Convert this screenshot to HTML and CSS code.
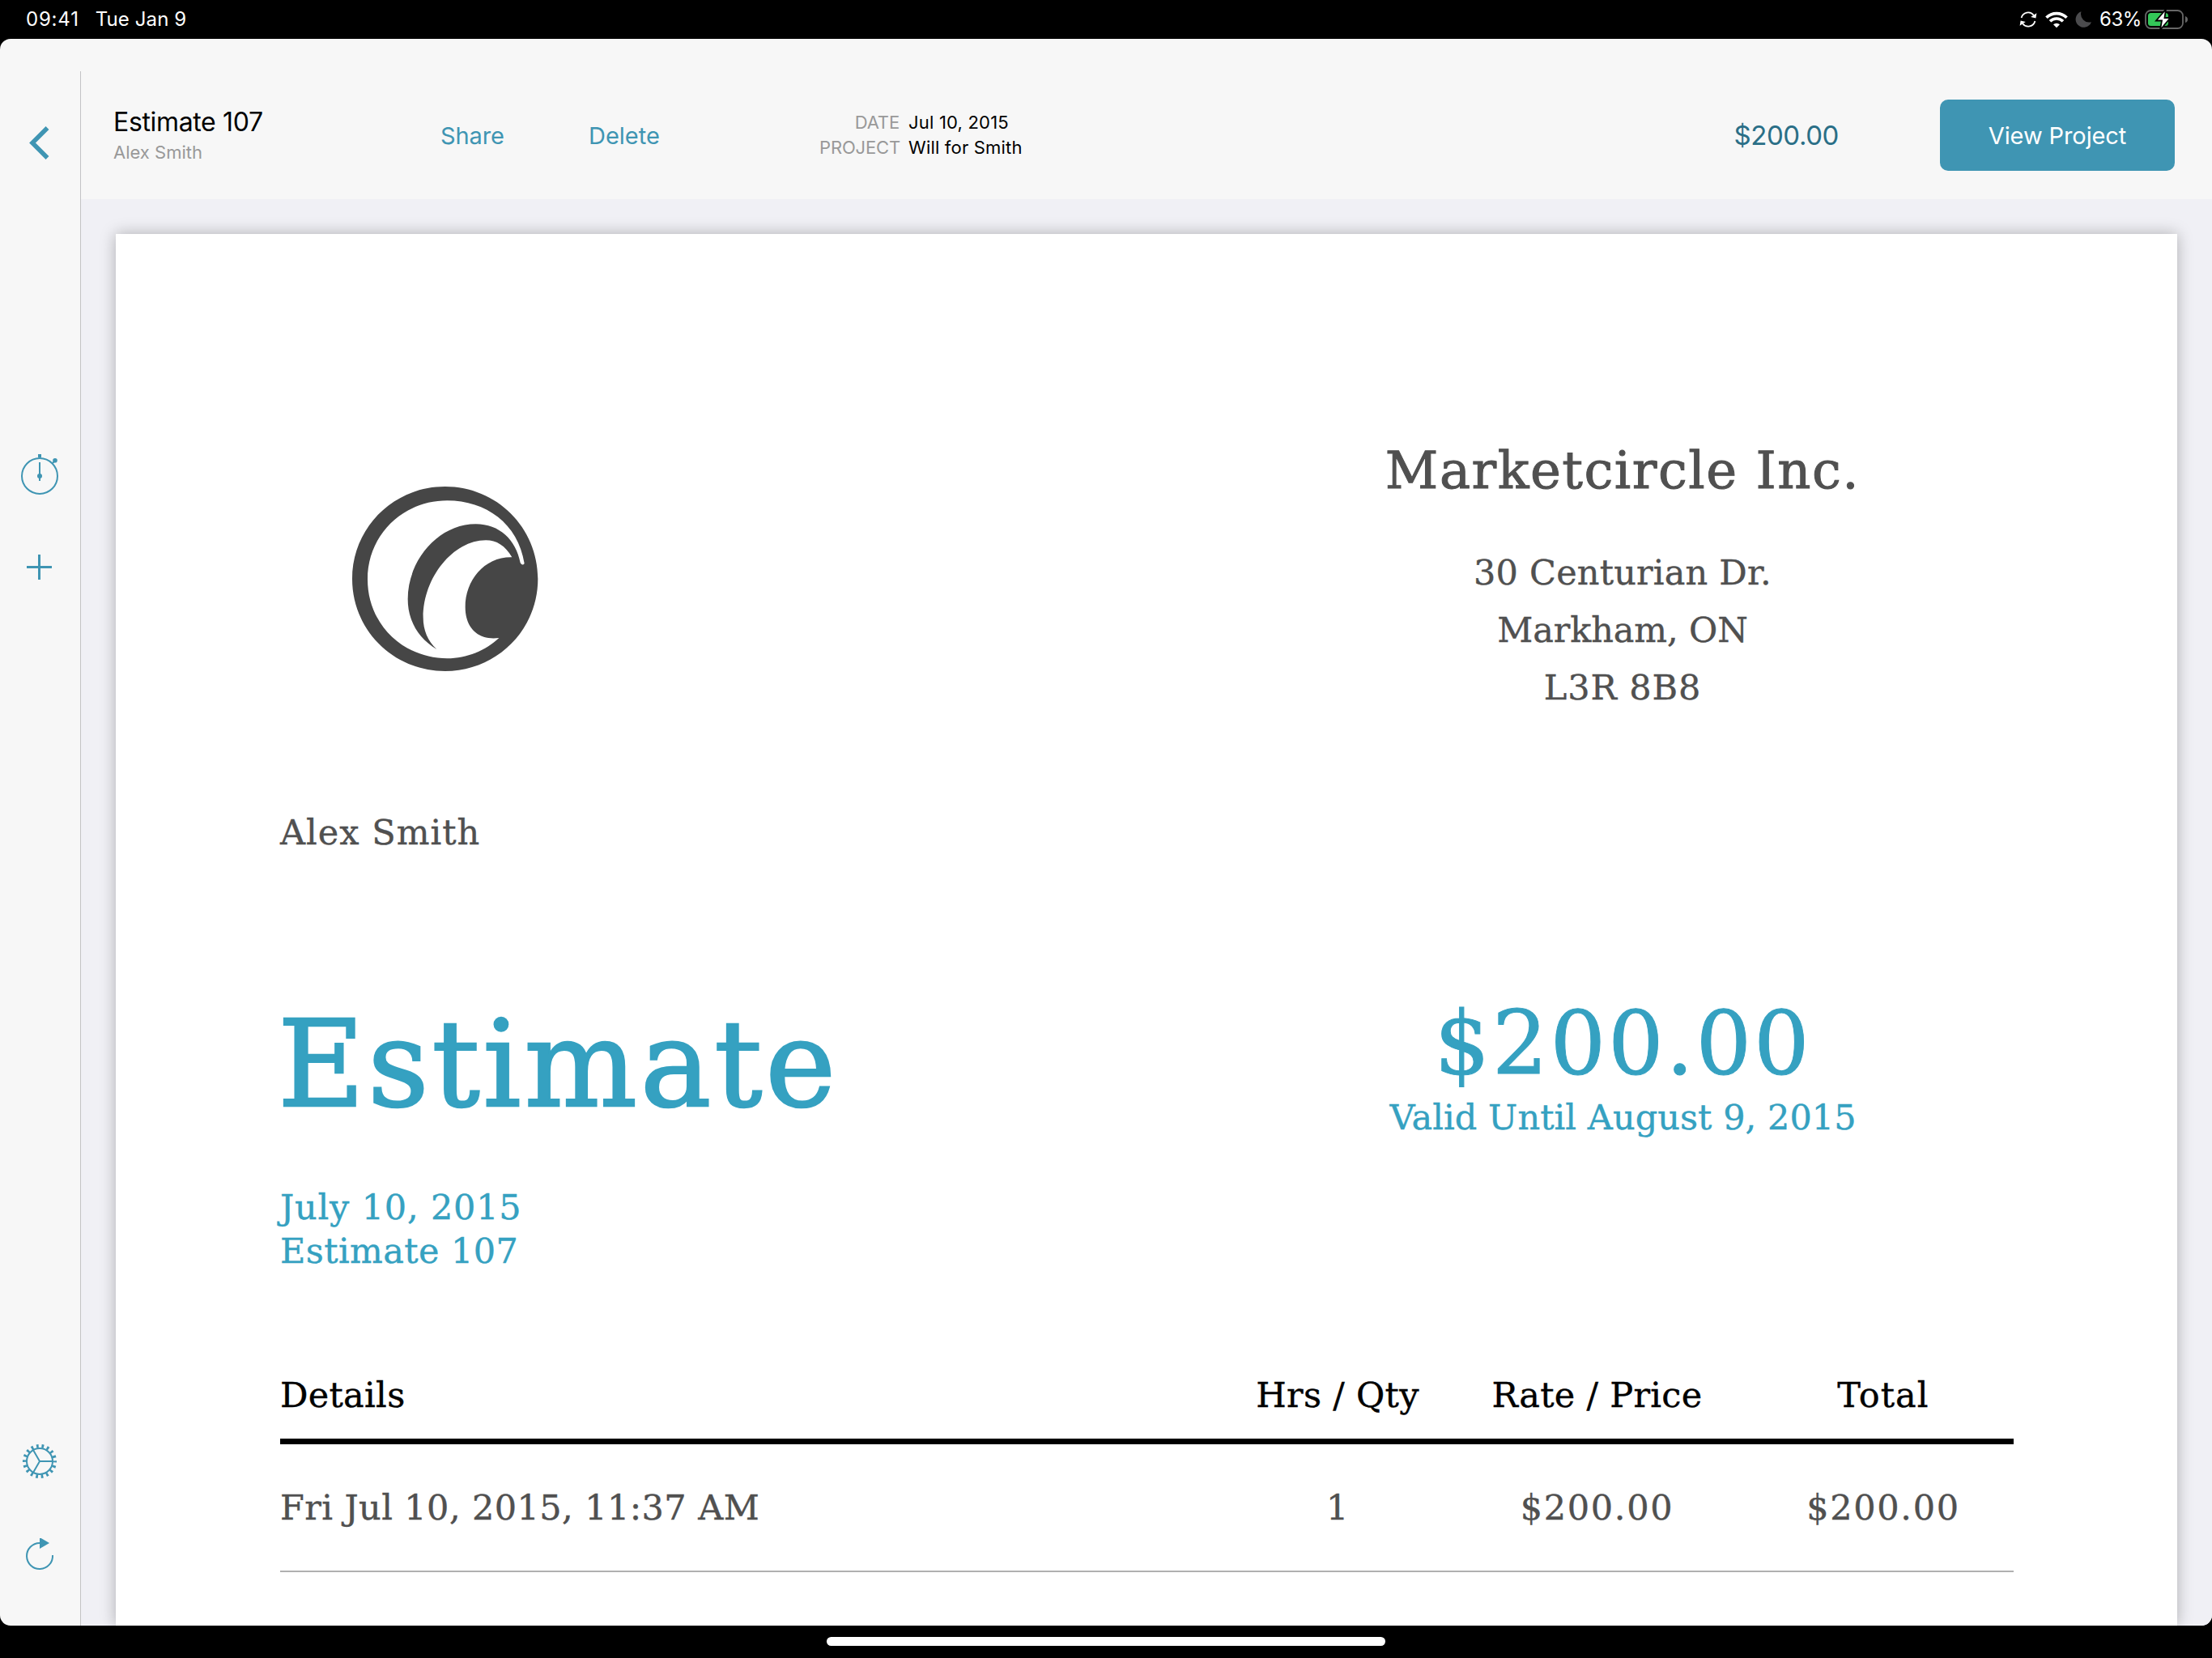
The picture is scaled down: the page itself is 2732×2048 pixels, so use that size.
FILE: index.html
```html
<!DOCTYPE html>
<html lang="en">
<head>
<meta charset="utf-8">
<title>Estimate 107</title>
<link rel="stylesheet" href="styles.css">
</head>
<body>
<header class="status">
  <span class="status-time">09:41</span>
  <span class="status-date">Tue Jan 9</span>
  <span class="status-right">
    <svg class="ic-sync" width="22" height="22" viewBox="0 0 22 22"><g fill="none" stroke="#fff" stroke-width="1.800"><path d="M2.600 9A8.600 8.600 0 0 1 17.800 5.800"/><path d="M19.400 13A8.600 8.600 0 0 1 4.200 16.200"/></g><path d="M21.400 3.200L20.400 9.600 14.200 8zM.6 18.800L1.600 12.400 7.800 14z" fill="#fff"/></svg>
    <svg class="ic-wifi" width="28" height="21" viewBox="0 0 28 21"><g fill="none" stroke="#fff" stroke-width="3.700"><path d="M1.500 7.800a17.600 17.600 0 0 1 25 0"/><path d="M6 12.300a11.300 11.300 0 0 1 16 0"/></g><path d="M14 20.300l-4-4a5.700 5.700 0 0 1 8 0z" fill="#fff"/></svg>
    <svg class="ic-moon" width="21" height="20" viewBox="0 0 21 20"><path d="M7.500.3A10 10 0 1 0 20 13.200 10.300 10.300 0 0 1 7.500.3z" fill="#4b4b4d"/></svg>
    <span class="status-pct">63%</span>
    <svg class="ic-batt" width="54" height="26" viewBox="0 0 54 26"><rect x="1" y="2" width="46" height="22" rx="6.500" fill="none" stroke="#666" stroke-width="1.800"/><path d="M50 9v8q3-1 3-4t-3-4z" fill="#666"/><rect x="4" y="5" width="25" height="16" rx="3.500" fill="#34c759"/><path d="M26 .5L14 14.500h7L19 26 31.500 11H24.500z" fill="#fff" stroke="#000" stroke-width="1.800"/></svg>
  </span>
</header>
<div class="app">
  <nav class="sidebar">
    <svg class="nav-back" width="30" height="44" viewBox="0 0 30 44"><path d="M26.500 4L8 22.500l18.500 18.500" fill="none" stroke="#3f95b3" stroke-width="5.500"/></svg>
    <svg class="nav-timer" width="50" height="54" viewBox="0 0 50 54"><circle cx="25" cy="29" r="22" fill="none" stroke="#3f95b3" stroke-width="2"/><path d="M23 2h4v4h-4zM24 12h2v23h-2z" fill="#3f95b3"/><circle cx="25" cy="29" r="3" fill="#3f95b3"/><path d="M41 13l3-3" stroke="#3f95b3" stroke-width="2"/><circle cx="44" cy="9.800" r="2.800" fill="#3f95b3"/></svg>
    <svg class="nav-add" width="31" height="31" viewBox="0 0 31 31"><path d="M15.500 0v31M0 15.500h31" stroke="#3f95b3" stroke-width="3"/></svg>
    <svg class="nav-gear" width="44" height="44" viewBox="-22 -22 44 44"><circle r="16" fill="none" stroke="#3f95b3" stroke-width="2"/><circle r="18.800" fill="none" stroke="#3f95b3" stroke-width="4.500" stroke-dasharray="2.700 3.862" stroke-dashoffset="1.350"/><path d="M0 0h17M0 0l-8.500-14.700M0 0l-8.500 14.700" stroke="#3f95b3" stroke-width="2"/></svg>
    <svg class="nav-refresh" width="44" height="44" viewBox="-22 -22 44 44"><path d="M16-1A16 16 0 1 1 0-16" fill="none" stroke="#3f95b3" stroke-width="2"/><path d="M0-23L12-16 0-9z" fill="#3f95b3"/></svg>
  </nav>
  <main class="main">
    <div class="toolbar">
      <div class="doc">
        <div class="doc-title">Estimate 107</div>
        <div class="doc-client">Alex Smith</div>
      </div>
      <a class="action share">Share</a>
      <a class="action delete">Delete</a>
      <dl class="meta">
        <dt>DATE</dt><dd>Jul 10, 2015</dd>
        <dt>PROJECT</dt><dd>Will for Smith</dd>
      </dl>
      <div class="amount">$200.00</div>
      <button class="view">View Project</button>
    </div>
    <div class="workspace">
      <article class="paper">
        <section class="letterhead">
          <svg class="logo" width="300" height="290" viewBox="0 0 900 870">
            <path fill="#464646" fill-rule="evenodd" d="M449 93C640 93 793 245 793 435S640 777 449 777 105 625 105 435 258 93 449 93zM457 145C295 145 162 270 162 437S295 730 457 730C530 730 600 700 649 654C575 664 524 620 524 540C524 440 595 353 697 355C672 312 640 292 600 292C480 292 368 430 368 578C368 625 385 665 418 696C350 655 311 590 311 510C311 365 425 232 563 232C650 232 712 290 728 376Q736 388 743 378C720 230 600 145 457 145z"/>
          </svg>
          <div class="company">
            <h2>Marketcircle Inc.</h2>
            <p class="street">30 Centurian Dr.</p>
            <p class="city">Markham, ON</p>
            <p class="postal">L3R 8B8</p>
          </div>
        </section>
        <p class="client">Alex Smith</p>
        <section class="summary">
          <div class="summary-left">
            <h1>Estimate</h1>
            <p class="issued">July 10, 2015</p>
            <p class="number">Estimate 107</p>
          </div>
          <div class="summary-right">
            <div class="total">$200.00</div>
            <p class="valid">Valid Until August 9, 2015</p>
          </div>
        </section>
        <div class="items">
          <div class="row head"><span>Details</span><span>Hrs / Qty</span><span>Rate / Price</span><span class="col-total">Total</span></div>
          <div class="row"><span>Fri Jul 10, 2015, 11:37 AM</span><span>1</span><span class="money">$200.00</span><span class="money">$200.00</span></div>
        </div>
      </article>
    </div>
  </main>
</div>
<footer class="home"><div class="home-pill"></div></footer>
</body>
</html>
```

FILE: styles.css
```css
* { box-sizing: border-box; margin: 0; padding: 0; }
body { width: 2732px; height: 2048px; background: #000; display: flex; flex-direction: column; overflow: hidden; font-family: Inter, "Liberation Sans", sans-serif; }
svg { display: block; flex: none; }

/* status bar */
.status { height: 48px; display: flex; align-items: center; color: #fff; font-size: 24px; line-height: 48px; padding: 0 29px 0 32px; white-space: nowrap; }
.status-time { letter-spacing: 0.8px; }
.status-date { margin-left: 20px; letter-spacing: 0.1px; }
.status-right { margin-left: auto; display: flex; align-items: center; }
.ic-wifi { margin-left: 10px; }
.ic-moon { margin-left: 9px; }
.status-pct { margin-left: 9px; letter-spacing: -0.4px; }
.ic-batt { margin-left: 4px; }

/* window and sidebar */
.app { height: 1960px; display: flex; background: #f7f7f7; border-radius: 13px; overflow: hidden; }
.sidebar { width: 100px; margin-top: 40px; border-right: 1px solid #c3c3c5; display: flex; flex-direction: column; }
.nav-back { margin: 66px 0 0 32px; }
.nav-timer { margin: 361px 0 0 24px; }
.nav-add { margin: 72px 0 0 33px; }
.nav-gear { margin: 1067px 0 0 27px; }
.nav-refresh { margin: 73px 0 0 27px; }

/* toolbar */
.main { flex: 1; display: flex; flex-direction: column; }
.toolbar { height: 198px; padding: 40px 46px 0 40px; display: flex; align-items: center; white-space: nowrap; }
.doc { width: 404px; margin-top: 4px; }
.doc-title { font-size: 32px; line-height: 38px; color: #000; letter-spacing: -0.35px; }
.doc-client { font-size: 22px; line-height: 37px; color: #999; }
.action { font-size: 29px; color: #3f95b3; }
.share { width: 183px; letter-spacing: -0.1px; }
.delete { width: 285px; }
.meta { display: grid; grid-template-columns: 99px auto; column-gap: 11px; font-size: 22px; line-height: 31px; }
.meta dt { color: #999; text-align: right; letter-spacing: -0.15px; }
.meta dd { letter-spacing: 0.2px; color: #000; }
.amount { margin-left: auto; margin-right: 125px; font-size: 33px; letter-spacing: -0.4px; color: #2a6f87; }
.view { width: 290px; height: 88px; border: 0; border-radius: 10px; background: #3f95b3; color: #fff; font: 29px Inter, "Liberation Sans", sans-serif; letter-spacing: -0.1px; }

/* document */
.workspace { flex: 1; background: #f0f0f5; padding: 43px 43px 0; overflow: hidden; }
.paper { height: 100%; background: #fff; box-shadow: 0 0 18px rgba(0, 0, 0, 0.28); padding: 0 202px 0 203px; color: #505050; font-family: "DejaVu Serif", serif; font-size: 43px; line-height: 54px; white-space: nowrap; -webkit-text-stroke: 0.4px; }
.letterhead { height: 712px; display: flex; }
.logo { margin: 281px 0 0 54px; }
.company { margin-left: auto; width: 968px; padding: 252px 0 0 2px; text-align: center; line-height: 71px; }
.company h2 { font-size: 64px; line-height: 80px; font-weight: 400; margin-bottom: 51px; letter-spacing: 1.5px; -webkit-text-stroke: 1px; }
.street { letter-spacing: 0.2px; }
.city { letter-spacing: -0.1px; }
.postal { letter-spacing: 0.9px; }
.client { letter-spacing: 1px; }
.summary { display: flex; margin-top: 171px; color: #35a1c1; }
.summary-left { flex: 1; padding-top: 5px; }
.summary h1 { font-size: 147px; line-height: 170px; font-weight: 400; letter-spacing: 3.9px; margin-left: -3px; -webkit-text-stroke: 2.5px; }
.issued { margin-top: 63px; letter-spacing: 0.8px; }
.number { letter-spacing: 0.4px; }
.summary-right { width: 968px; padding-left: 3px; text-align: center; }
.total { font-size: 108px; line-height: 126px; letter-spacing: 2.8px; -webkit-text-stroke: 1px; }
.valid { margin-top: 1px; letter-spacing: 0.05px; }
.items { margin-top: 124px; }
.row { display: grid; grid-template-columns: 1178px 256px 385px 322px; padding: 51px 0; border-bottom: 2px solid #b0b0b0; text-align: center; letter-spacing: 0.4px; }
.row > :first-child { text-align: left; }
.head { padding: 0 0 27px; border-bottom: 7px solid #000; color: #000; letter-spacing: 0.3px; }
.col-total { letter-spacing: 1.1px; }
.money { letter-spacing: 1.7px; }

/* home indicator */
.home { height: 40px; padding-top: 14px; }
.home-pill { width: 690px; height: 11px; margin: 0 auto; border-radius: 6px; background: #fff; }
```
